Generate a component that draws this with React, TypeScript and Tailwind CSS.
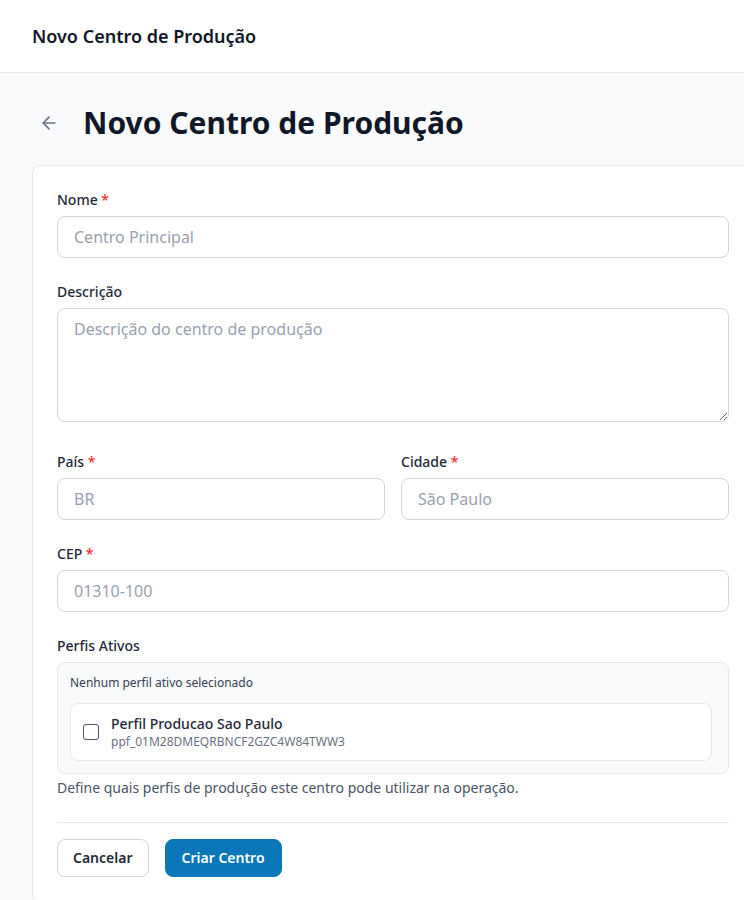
import { ArrowLeft } from 'lucide-react';

/**
 * Form field wrapper: label with optional required marker.
 */
const Field = ({ label, required, children }: { label: string; required?: boolean; children: React.ReactNode }) => (
  <div>
    <label className="block text-sm font-medium text-gray-800 mb-1.5">
      {label}
      {required && <span className="text-red-500"> *</span>}
    </label>
    {children}
  </div>
);

const inputClass =
  'block w-full rounded-lg border border-gray-300 bg-white px-4 py-2 text-base leading-6 text-gray-900 placeholder:text-gray-400 outline-none';

function App() {
  return (
    <div
      className="min-h-screen w-[744px] overflow-hidden bg-gray-50 text-gray-900 antialiased"
      style={{ fontFamily: '"Noto Sans", "Open Sans", sans-serif' }}
    >
      {/* Top bar */}
      <header className="h-[73px] flex items-center px-8 bg-white border-b border-gray-200">
        <h2 className="text-lg font-semibold text-gray-900">Novo Centro de Produção</h2>
      </header>

      <main className="px-8 pt-8 pb-10">
        {/* Page heading */}
        <div className="flex items-center gap-4 mb-6">
          <button className="p-2 pl-[7px] text-gray-500">
            <ArrowLeft size={20} strokeWidth={2} />
          </button>
          <h1 className="text-3xl font-bold leading-9 text-gray-900">Novo Centro de Produção</h1>
        </div>

        {/* Form card */}
        <div className="w-[722px] shrink-0 rounded-lg border border-gray-200 bg-white p-6">
          <div className="space-y-6">
            <Field label="Nome" required>
              <input className={inputClass} placeholder="Centro Principal" />
            </Field>

            <Field label="Descrição">
              <textarea className={`${inputClass} h-[114px] resize-y`} rows={4} placeholder="Descrição do centro de produção" />
            </Field>

            <div className="grid grid-cols-2 gap-4 pt-1.5">
              <Field label="País" required>
                <input className={inputClass} placeholder="BR" />
              </Field>
              <Field label="Cidade" required>
                <input className={inputClass} placeholder="São Paulo" />
              </Field>
            </div>

            <Field label="CEP" required>
              <input className={inputClass} placeholder="01310-100" />
            </Field>

            <div>
              <label className="block text-sm font-medium text-gray-800 mb-1.5">Perfis Ativos</label>
              <div className="rounded-lg border border-gray-200 bg-gray-50 p-3">
                <p className="text-xs leading-4 text-gray-700 mb-3">Nenhum perfil ativo selecionado</p>
                <label className="mr-1 flex items-center gap-3 rounded-lg border border-gray-200 bg-white px-3 py-[10px]">
                  <span className="w-4 h-4 rounded-[3px] border border-gray-600 bg-white shrink-0" />
                  <span className="flex flex-col">
                    <span className="text-sm font-medium leading-5 text-gray-800">Perfil Producao Sao Paulo</span>
                    <span className="text-xs leading-4 text-gray-500">ppf_01M28DMEQRBNCF2GZC4W84TWW3</span>
                  </span>
                </label>
              </div>
              <p className="mt-1 text-sm leading-5 text-gray-600">
                Define quais perfis de produção este centro pode utilizar na operação.
              </p>
            </div>

            {/* Actions */}
            <div className="border-t border-gray-200 pt-4 flex gap-4">
              <button className="rounded-lg border border-gray-300 bg-white px-[15px] py-2 text-sm font-semibold leading-5 text-gray-800">
                Cancelar
              </button>
              <button className="rounded-lg border border-[#0a78b8] bg-[#0a78b8] px-4 py-2 text-sm font-semibold leading-5 text-white">
                Criar Centro
              </button>
            </div>
          </div>
        </div>
      </main>
    </div>
  );
}

export default App;
